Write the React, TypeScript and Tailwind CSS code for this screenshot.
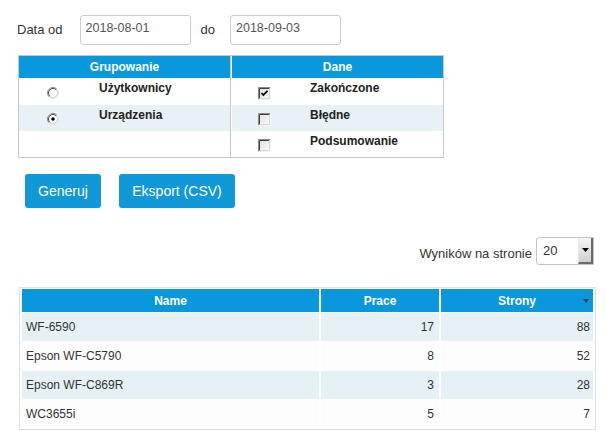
import React from "react";

function Radio({ checked }: { checked?: boolean }) {
  return (
    <svg width="12" height="12" viewBox="0 0 12 12">
      <circle cx="6" cy="6" r="5.5" fill="#ffffff" />
      <path d="M2.1 9.9 A5.5 5.5 0 0 1 9.9 2.1" fill="none" stroke="#8a8a8a" strokeWidth="1" />
      <path d="M9.9 2.1 A5.5 5.5 0 0 1 2.1 9.9" fill="none" stroke="#e2e2e2" strokeWidth="1" />
      <path d="M2.8 9.2 A4.5 4.5 0 0 1 9.2 2.8" fill="none" stroke="#444" strokeWidth="1" />
      <path d="M9.2 2.8 A4.5 4.5 0 0 1 2.8 9.2" fill="none" stroke="#cfcfcf" strokeWidth="1" />
      {checked && <circle cx="6" cy="6" r="1.8" fill="#000" />}
    </svg>
  );
}

function Check({ checked }: { checked?: boolean }) {
  return (
    <svg width="13" height="13" viewBox="0 0 13 13">
      <defs>
        <linearGradient id="cbg" x1="0" y1="0" x2="1" y2="1">
          <stop offset="0" stopColor="#dcdcdc" />
          <stop offset="1" stopColor="#ffffff" />
        </linearGradient>
      </defs>
      <rect x="0" y="0" width="13" height="13" fill="url(#cbg)" />
      <path d="M0.5 12.5 V0.5 H12.5" fill="none" stroke="#8a8a8a" />
      <path d="M1.5 11.5 V1.5 H11.5" fill="none" stroke="#404040" />
      <path d="M0.5 12.5 H12.5 V0.5" fill="none" stroke="#f4f4f4" />
      <path d="M1.5 11.5 H11.5 V1.5" fill="none" stroke="#d8d8d8" />
      {checked && (
        <path d="M3.5 6 L5.3 8 L9.5 3.8" fill="none" stroke="#000" strokeWidth="1.7" />
      )}
    </svg>
  );
}

const rows = [
  { name: "WF-6590", prace: 17, strony: 88 },
  { name: "Epson WF-C5790", prace: 8, strony: 52 },
  { name: "Epson WF-C869R", prace: 3, strony: 28 },
  { name: "WC3655i", prace: 5, strony: 7 },
];

export default function App() {
  return (
    <div className="w-[606px] h-[431px] bg-white overflow-hidden font-['Liberation_Sans',Arial,sans-serif] text-[#333]">
      {/* date range */}
      <div className="pt-[15px] pl-[17px] flex items-center text-[13px]">
        <span className="text-[#333]">Data od</span>
        <div className="ml-[17px] w-[111px] h-[30px] border border-[#cccccc] rounded-[3px] pl-[5px] pb-[3px] flex items-center text-[12.5px] text-[#555]">
          2018-08-01
        </div>
        <span className="ml-[10px]">do</span>
        <div className="ml-[15px] w-[111px] h-[30px] border border-[#cccccc] rounded-[3px] pl-[5px] pb-[3px] flex items-center text-[12.5px] text-[#555]">
          2018-09-03
        </div>
      </div>

      {/* filters */}
      <div className="mt-[10px] ml-[18px] w-[426px] border border-[#c9c9c9] flex text-[12px] font-bold text-[#222]">
        <div className="w-[212px] border-r border-[#c9c9c9]">
          <div className="h-[22px] bg-[#0a98dc] text-white text-center leading-[22px]">Grupowanie</div>
          <div className="h-[27px] flex bg-white">
            <div className="w-[68px] flex items-center justify-center pt-[2px]">
              <Radio />
            </div>
            <div className="pl-[12px] pt-[1px]">Użytkownicy</div>
          </div>
          <div className="h-[26px] flex bg-[#e7f1f6]">
            <div className="w-[68px] flex items-center justify-center pt-[1px]">
              <Radio checked />
            </div>
            <div className="pl-[12px] pt-[1px]">Urządzenia</div>
          </div>
          <div className="h-[26px] bg-white" />
        </div>
        <div className="flex-1 ml-[1px]">
          <div className="h-[22px] bg-[#0a98dc] text-white text-center leading-[22px]">Dane</div>
          {[
            { l: "Zakończone", c: true, bg: "bg-white", h: "h-[27px]" },
            { l: "Błędne", c: false, bg: "bg-[#e7f1f6]", h: "h-[26px]" },
            { l: "Podsumowanie", c: false, bg: "bg-white", h: "h-[26px]" },
          ].map((r) => (
            <div key={r.l} className={`${r.h} flex ${r.bg}`}>
              <div className="w-[64px] flex items-center justify-center pt-[3px]">
                <Check checked={r.c} />
              </div>
              <div className="pl-[14px] pt-[1px]">{r.l}</div>
            </div>
          ))}
        </div>
      </div>

      {/* buttons */}
      <div className="mt-[16px] ml-[25px] flex gap-[18px]">
        <button className="h-[34px] w-[76px] rounded-[3px] bg-[#1098d8] text-white text-[14px]">Generuj</button>
        <button className="h-[34px] w-[116px] rounded-[3px] bg-[#1098d8] text-white text-[14px]">Eksport (CSV)</button>
      </div>

      {/* per page */}
      <div className="mt-[29px] pr-[12px] flex justify-end items-center text-[13px]">
        <span className="mt-[5px] mr-[4px] text-[#333]">Wyników na stronie</span>
        <div className="w-[58px] h-[28px] border border-[#c4c4c4] rounded-l-[3px] bg-white flex">
          <div className="flex-1 pl-[6px] pt-[3px] text-[13px] text-[#333]">20</div>
          <div className="w-[15px] h-full bg-gradient-to-b from-[#f6f6f6] to-[#cfcfcf] border-l border-[#e8e8e8] border-r-2 border-b-2 border-r-[#6a6a6a] border-b-[#6a6a6a] flex items-center justify-center">
            <svg width="7" height="4" viewBox="0 0 7 4">
              <path d="M0 0 H7 L3.5 4 Z" fill="#000" />
            </svg>
          </div>
        </div>
      </div>

      {/* data table */}
      <div className="mt-[22px] ml-[19px]">
        <table className="w-[577px] border border-[#dbe3e8] border-separate border-spacing-x-[2px] border-spacing-y-px text-[12px]">
          <thead>
            <tr className="h-[23px]">
              <th className="w-[297px] bg-[#0a98dc] text-white font-bold text-center p-0">Name</th>
              <th className="w-[118px] bg-[#0a98dc] text-white font-bold text-center p-0">Prace</th>
              <th className="bg-[#0a98dc] text-white font-bold text-center p-0 relative">
                Strony
                <svg className="absolute right-[4px] top-[10px]" width="6" height="4" viewBox="0 0 6 4">
                  <path d="M0 0 H6 L3 4 Z" fill="#203a5a" />
                </svg>
              </th>
            </tr>
          </thead>
          <tbody>
            {rows.map((r, i) => {
              const bg = i % 2 === 0 ? "bg-[#e6f1f6]" : "bg-[#fdfdfe]";
              return (
                <tr key={r.name} className="h-[28px] text-[#333]">
                  <td className={`${bg} pl-[4px] p-0`}>{r.name}</td>
                  <td className={`${bg} text-right pr-[5px]`}>{r.prace}</td>
                  <td className={`${bg} text-right pr-[3px]`}>{r.strony}</td>
                </tr>
              );
            })}
          </tbody>
        </table>
      </div>
    </div>
  );
}
